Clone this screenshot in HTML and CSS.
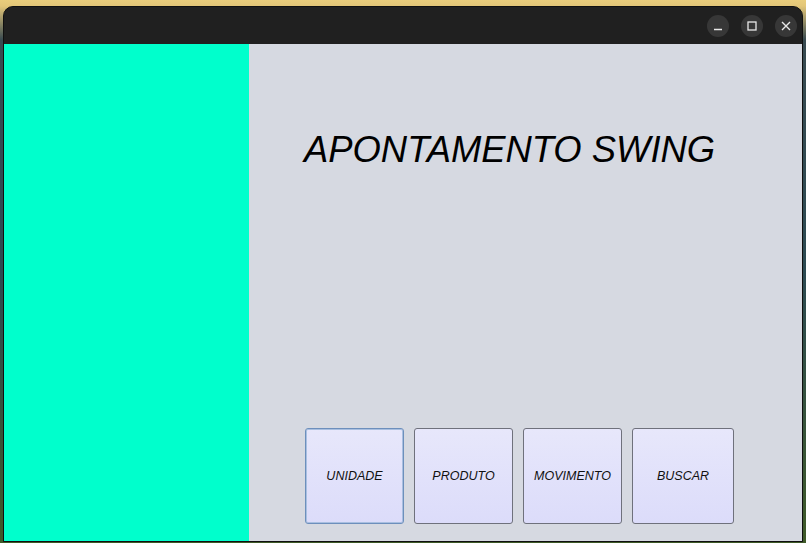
FILE: index.html
```html
<!DOCTYPE html>
<html>
<head>
<meta charset="utf-8">
<link rel="stylesheet" href="styles.css">
</head>
<body>
<div class="desktop">
  <div class="window">
    <div class="titlebar">
      <div class="controls">
        <span class="ctl"><svg width="10" height="10" viewBox="0 0 10 10"><path d="M1 8.5H9" stroke="#e8e8e8" stroke-width="1.3"/></svg></span>
        <span class="ctl"><svg width="10" height="10" viewBox="0 0 10 10"><rect x="1" y="1" width="8" height="8" fill="none" stroke="#e8e8e8" stroke-width="1.3"/></svg></span>
        <span class="ctl"><svg width="10" height="10" viewBox="0 0 10 10"><path d="M1 1L9 9M9 1L1 9" stroke="#e8e8e8" stroke-width="1.4"/></svg></span>
      </div>
    </div>
    <div class="content">
      <div class="side"></div>
      <div class="main">
        <h1 class="title">APONTAMENTO SWING</h1>
        <div class="buttons">
          <button class="btn focused">UNIDADE</button>
          <button class="btn">PRODUTO</button>
          <button class="btn">MOVIMENTO</button>
          <button class="btn wide">BUSCAR</button>
        </div>
      </div>
    </div>
  </div>
</div>
</body>
</html>
```

FILE: styles.css
```css
html, body {
  margin: 0;
  padding: 0;
  width: 806px;
  height: 543px;
  overflow: hidden;
}
.desktop {
  width: 806px;
  height: 543px;
  box-sizing: border-box;
  padding: 6px 3px 0 3px;
  background:
    linear-gradient(to bottom, #e9cd7c 0px, #e3c678 6px, rgba(0,0,0,0) 40px),
    linear-gradient(to bottom, #3a4a50 0%, #2c4a52 50%, #3f5a28 100%);
}
.window {
  width: 800px;
  height: 536px;
  box-sizing: border-box;
  border: 1px solid #101010;
  border-radius: 10px 10px 0 0;
  overflow: hidden;
  display: flex;
  flex-direction: column;
  background: #202020;
}
.titlebar {
  height: 37px;
  flex: none;
  background: #202020;
  display: flex;
  justify-content: flex-end;
  align-items: center;
  padding-right: 5px;
}
.controls {
  display: flex;
  gap: 12px;
  margin-top: 1px;
}
.ctl {
  width: 22px;
  height: 22px;
  border-radius: 50%;
  background: #373737;
  display: flex;
  align-items: center;
  justify-content: center;
}
.content {
  flex: 1;
  display: flex;
}
.side {
  width: 245px;
  flex: none;
  background: #00ffcc;
}
.main {
  flex: 1;
  background: #d6d9e1;
  display: flex;
  flex-direction: column;
  padding-left: 55px;
}
.title {
  margin: 82px 0 0 0;
  font-family: "Liberation Sans", Arial, sans-serif;
  font-style: italic;
  font-weight: normal;
  font-size: 36.4px;
  line-height: 47px;
  color: #000;
}
.buttons {
  margin-top: auto;
  margin-bottom: 17px;
  display: flex;
  gap: 10px;
  padding-left: 1px;
}
.btn {
  width: 99px;
  height: 96px;
  box-sizing: border-box;
  border: 1px solid #6f717c;
  border-radius: 3px;
  background: linear-gradient(to bottom, #e7e7fb 0%, #dcdcfa 100%);
  font-family: "Liberation Sans", Arial, sans-serif;
  font-style: italic;
  font-size: 12.5px;
  color: #111;
  padding: 0;
}
.btn.wide {
  width: 102px;
}
.btn.focused {
  border-color: #6d8fbc;
  box-shadow: inset 0 0 0 1px #a9bfe0;
}
```
